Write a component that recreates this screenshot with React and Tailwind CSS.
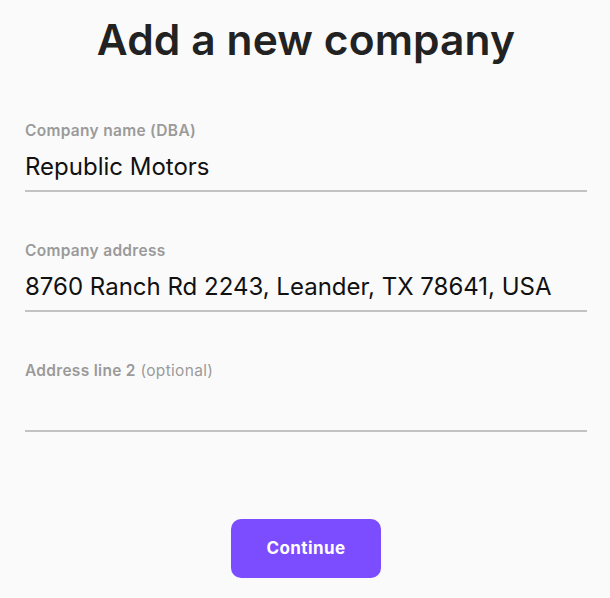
import React, { useState } from 'react';

const FONT = { fontFamily: 'Inter, "Noto Sans", sans-serif' };

function Field({ label, hint, value, onChange }) {
  return (
    <div className="flex flex-col">
      <label className="h-5 text-[15.5px] leading-5 font-semibold text-[#9a9a9a] tracking-[0.3px]">
        {label}
        {hint && <span className="font-normal"> {hint}</span>}
      </label>
      <input
        className="mt-1 h-[47px] w-full border-b-2 border-[#c2c2c2] bg-transparent text-[24px] text-[#111] outline-none pb-[2px]"
        value={value}
        onChange={(e) => onChange(e.target.value)}
      />
    </div>
  );
}

export default function App() {
  const [name, setName] = useState('Republic Motors');
  const [address, setAddress] = useState('8760 Ranch Rd 2243, Leander, TX 78641, USA');
  const [line2, setLine2] = useState('');

  return (
    <div className="min-h-[598px] w-full bg-[#fafafa] pl-[25px] pr-[23px]" style={FONT}>
      <h1 className="pt-[15px] text-center text-[42.5px] leading-[50px] font-semibold text-[#222] tracking-[0.1px]">
        Add a new company
      </h1>

      <div className="mt-[56px] flex flex-col gap-[49px]">
        <Field label="Company name (DBA)" value={name} onChange={setName} />
        <Field label="Company address" value={address} onChange={setAddress} />
        <Field label="Address line 2" hint="(optional)" value={line2} onChange={setLine2} />
      </div>

      <div className="mt-[87px] flex justify-center">
        <button className="h-[59px] w-[150px] rounded-[10px] bg-[#7b4dff] text-[17px] font-bold text-white tracking-[0.4px]">
          Continue
        </button>
      </div>
    </div>
  );
}
